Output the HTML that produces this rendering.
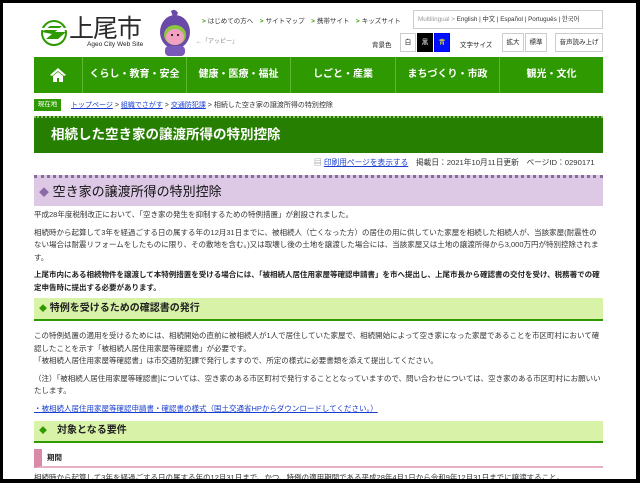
<!DOCTYPE html>
<html><head><meta charset="utf-8"><style>
*{margin:0;padding:0;box-sizing:border-box}
body{width:640px;height:483px;overflow:hidden;background:#000;font-family:"Liberation Sans","Noto Sans CJK JP",sans-serif;color:#222}
#pg{position:absolute;left:3px;top:3px;width:633px;height:476px;background:#fff;overflow:hidden}
.a{position:absolute;white-space:nowrap}
.tl{font-size:6.5px;color:#333}
.tl b{color:#3a9a00;margin-right:2px}
.btn{position:absolute;border:1px solid #ccc;font-size:6.5px;text-align:center;line-height:17px;height:19px;background:#fff}
.nav{position:absolute;left:31px;top:54px;width:569px;height:36px;background:#2e9900}
.nav div{position:absolute;top:0;height:36px;line-height:36px;color:#fff;font-weight:bold;font-size:10px;text-align:center;border-left:1px solid #5cb82e}
p{font-size:7.5px;line-height:12.5px;color:#333}
.h3{position:absolute;left:31px;width:569px;background:#d8f2a8;border-bottom:2px solid #2e9900;font-size:10px;font-weight:bold;color:#222}
.link{color:#1a3fd0;text-decoration:underline}
</style></head><body><div id="pg">
<svg class="a" style="left:37px;top:12px" width="28" height="36" viewBox="0 0 28 36"><circle cx="14" cy="18" r="12" fill="none" stroke="#2e9900" stroke-width="2"/><path d="M2 17 L10 11 L22 11 L15 17 L26 17 L18 24 L6 24 L12 19Z" fill="#2e9900"/><rect x="0" y="13" width="28" height="2" fill="#fff"/></svg>
<div class="a" style="left:66px;top:6px;font-size:25px;color:#2a2a2a;letter-spacing:-1px">上尾市</div>
<div class="a" style="left:84px;top:38px;font-size:6.5px;color:#222">Ageo City Web Site</div>
<svg class="a" style="left:153px;top:5px" width="38" height="50" viewBox="0 0 38 50"><ellipse cx="19" cy="24" rx="15" ry="17" fill="#6a4aa8"/><ellipse cx="19" cy="27" rx="11" ry="10" fill="#8cc63f"/><ellipse cx="19" cy="29" rx="9" ry="8" fill="#f4a0c0"/><rect x="9" y="38" width="20" height="10" rx="4" fill="#7a5ab8"/><circle cx="16" cy="27" r="1" fill="#000"/><circle cx="22" cy="27" r="1" fill="#000"/><path d="M15 3 Q19 0 22 5 L20 9 L17 9Z" fill="#6a4aa8"/></svg>
<div class="a" style="left:193px;top:33px;font-size:6px;color:#888">←「アッピー」</div>
<div class="a tl" style="left:199px;top:12px"><b>&gt;</b>はじめての方へ　<b>&gt;</b>サイトマップ　<b>&gt;</b>携帯サイト　<b>&gt;</b>キッズサイト</div>
<div class="a" style="left:410px;top:7px;width:190px;height:19px;border:1px solid #ccc;font-size:6.3px;line-height:17px;padding-left:4px;color:#333"><span style="color:#999">Multilingual &gt;</span> English | 中文 | Español | Português | 한국어</div>
<div class="a" style="left:369px;top:36px;font-size:6.5px">背景色</div>
<div class="btn" style="left:397px;top:30px;width:16px">白</div>
<div class="btn" style="left:414px;top:30px;width:16px;background:#000;color:#fff;border-color:#000">黒</div>
<div class="btn" style="left:431px;top:30px;width:16px;background:#0010ff;color:#ff0;border-color:#00f">青</div>
<div class="a" style="left:457px;top:36px;font-size:6.5px">文字サイズ</div>
<div class="btn" style="left:499px;top:30px;width:22px">拡大</div>
<div class="btn" style="left:522px;top:30px;width:22px">標準</div>
<div class="btn" style="left:552px;top:30px;width:48px">音声読み上げ</div>
<div class="nav">
<div style="left:0;width:48px;border:none"><svg width="18" height="18" viewBox="0 0 18 18" style="margin-top:9px"><path d="M9 2 L17 9 L15 10 L9 5 L3 10 L1 9Z M4 10 L9 6 L14 10 V16 H10 V12 H8 V16 H4Z" fill="#fff"/></svg></div>
<div style="left:48px;width:104px">くらし・教育・安全</div>
<div style="left:152px;width:104px">健康・医療・福祉</div>
<div style="left:256px;width:105px">しごと・産業</div>
<div style="left:361px;width:104px">まちづくり・市政</div>
<div style="left:465px;width:104px">観光・文化</div>
</div>
<div class="a" style="left:31px;top:96px;width:27px;height:12px;background:#2e9900;color:#fff;font-size:6.5px;line-height:12px;text-align:center">現在地</div>
<div class="a" style="left:68px;top:97px;font-size:7px;color:#333"><span class="link">トップページ</span> &gt; <span class="link">組織でさがす</span> &gt; <span class="link">交通防犯課</span> &gt; 相続した空き家の譲渡所得の特別控除</div>
<div class="a" style="left:31px;top:113px;width:569px;height:37px;background:#267f00;border-top:2px dotted #8fc06f;color:#fff;font-weight:bold;font-size:13.5px;line-height:33px;padding-left:17px">相続した空き家の譲渡所得の特別控除</div>
<div class="a" style="left:311px;top:154px;font-size:7.7px;color:#333"><span style="color:#666">▤</span> <span class="link">印刷用ページを表示する</span>　掲載日：2021年10月11日更新　ページID：0290171</div>
<div class="a" style="left:31px;top:172px;width:569px;height:31px;background:#ddc8e6;border-top:3px dotted #8a6a9a;font-size:13px;line-height:28px;padding-left:5px;color:#111"><span style="color:#8a6aa8;font-size:10px">◆</span> 空き家の譲渡所得の特別控除</div>
<div class="a" style="left:31px;top:206px;width:569px;white-space:normal">
<p style="margin-bottom:5px">平成28年度税制改正において、「空き家の発生を抑制するための特例措置」が創設されました。</p>
<p style="margin-bottom:5px">相続時から起算して3年を経過ごする日の属する年の12月31日までに、被相続人（亡くなった方）の居住の用に供していた家屋を相続した相続人が、当該家屋(耐震性のない場合は耐震リフォームをしたものに限り、その敷地を含む。)又は取壊し後の土地を譲渡した場合には、当該家屋又は土地の譲渡所得から3,000万円が特別控除されます。</p>
<p style="font-weight:bold;color:#222">上尾市内にある相続物件を譲渡して本特例措置を受ける場合には、「被相続人居住用家屋等確認申請書」を市へ提出し、上尾市長から確認書の交付を受け、税務署での確定申告時に提出する必要があります。</p>
</div>
<div class="h3" style="top:295px;height:23px;line-height:21px;padding-left:5px"><span style="color:#2e9900;font-size:8px">◆</span> 特例を受けるための確認書の発行</div>
<div class="a" style="left:31px;top:327px;width:569px;white-space:normal">
<p style="margin-bottom:5px">この特例処置の適用を受けるためには、相続開始の直前に被相続人が1人で居住していた家屋で、相続開始によって空き家になった家屋であることを市区町村において確認したことを示す「被相続人居住用家屋等確認書」が必要です。<br>「被相続人居住用家屋等確認書」は市交通防犯課で発行しますので、所定の様式に必要書類を添えて提出してください。</p>
<p style="margin-bottom:5px">（注）「被相続人居住用家屋等確認書]については、空き家のある市区町村で発行することとなっていますので、問い合わせについては、空き家のある市区町村にお願いいたします。</p>
<p><span class="link">・被相続人居住用家屋等確認申請書・確認書の様式（国土交通省HPからダウンロードしてください。）</span></p>
</div>
<div class="h3" style="top:418px;height:22px;line-height:20px;padding-left:5px"><span style="color:#2e9900;font-size:8px">◆</span>　対象となる要件</div>
<div class="a" style="left:31px;top:446px;width:569px;height:19px;border-left:8px solid #d88aa8;border-bottom:2px solid #e8b0c4;font-size:7.5px;font-weight:bold;line-height:17px;padding-left:5px">期間</div>
<div class="a" style="left:31px;top:469px;font-size:7.5px;color:#333">相続時から起算して3年を経過ごする日の属する年の12月31日まで、かつ、特例の適用期間である平成28年4月1日から令和9年12月31日までに譲渡すること。</div>
</div></body></html>
